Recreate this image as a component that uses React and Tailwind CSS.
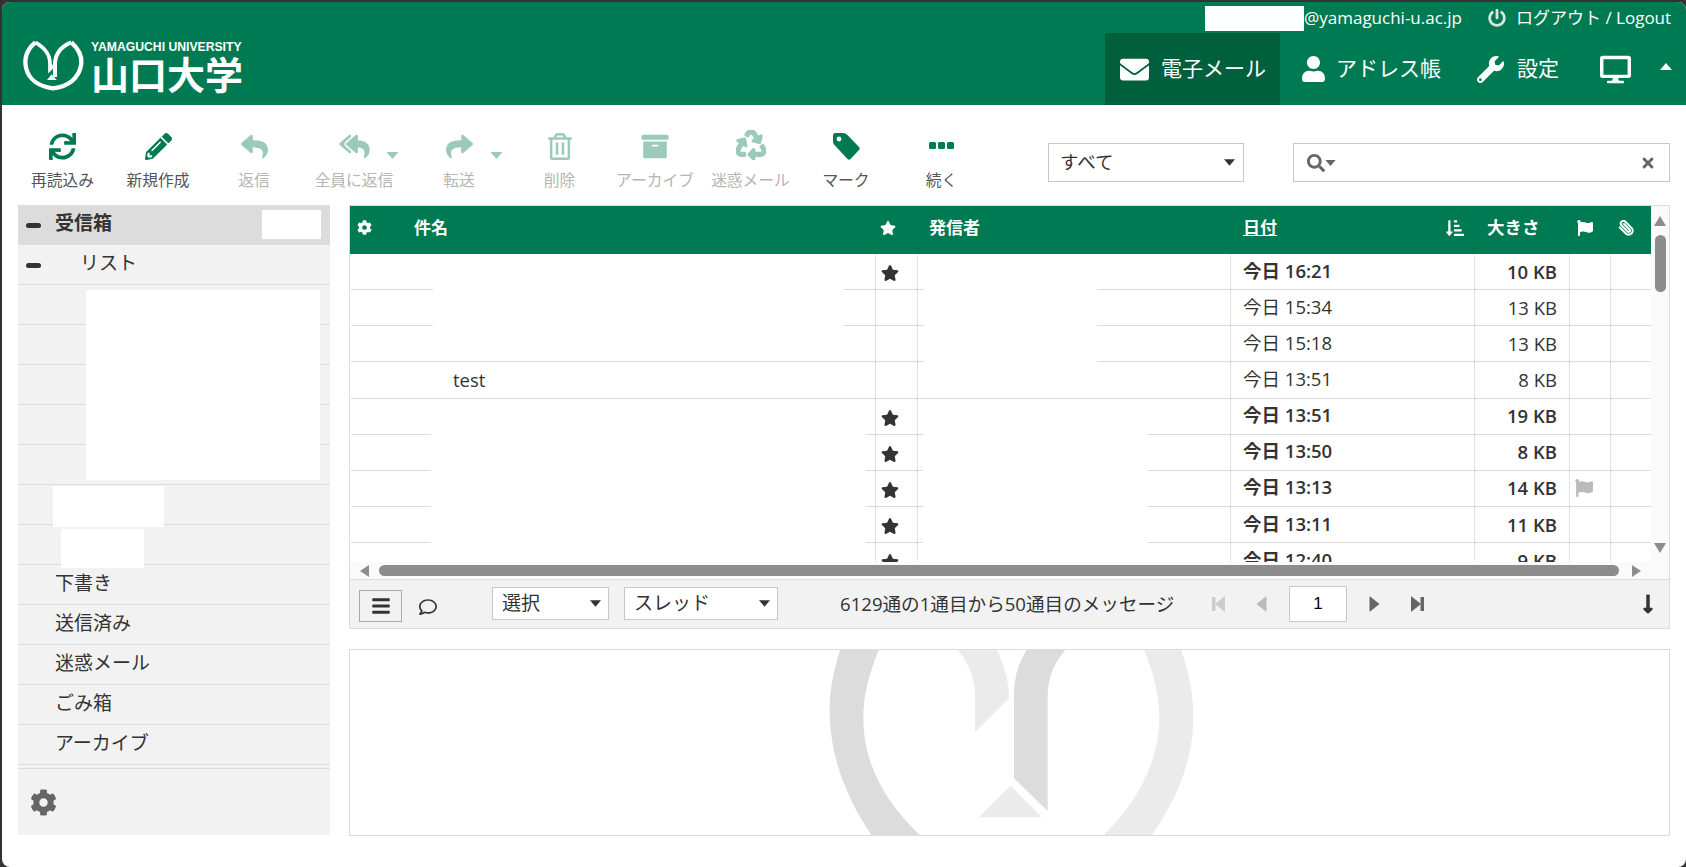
import React from "react";
import {
  FaSync, FaPencilAlt, FaReply, FaReplyAll, FaShare, FaRegTrashAlt, FaArchive, FaRecycle,
  FaEnvelope, FaUser, FaWrench, FaDesktop, FaPowerOff, FaCog, FaStar, FaFlag, FaSortAmountDownAlt,
  FaBars, FaRegComment, FaSearch, FaTimes, FaLongArrowAltDown,
} from "react-icons/fa";
import { FiPaperclip } from "react-icons/fi";

function Logo() {
  return (
    <svg viewBox="0 0 210 186" className="w-[70px] h-[62px] shrink-0 mt-[2px]" fill="none">
      <path d="M52 22 C25 45 18 70 24 98 C32 135 65 155 105 160 C150 155 185 130 190 85 C192 60 180 40 160 22" stroke="#fff" strokeWidth="13" />
      <path d="M52 22 C62 28 72 34 80 44 C92 58 96 72 96 86 L96 102 L106 92" stroke="#fff" strokeWidth="11" />
      <path d="M160 22 C135 32 113 52 111 84 L111 126" stroke="#fff" strokeWidth="12" />
      <path d="M101 118 L116 135 L87 135 Z" fill="#fff" />
    </svg>
  );
}

function Watermark() {
  return (
    <svg viewBox="0 0 1200 585" className="absolute left-[460px] top-[-5px] w-[400px] h-[195px]">
      <path d="M95 0 C65 90 55 160 60 230 C68 360 120 480 195 585 L345 585 C230 480 160 360 160 220 C160 140 180 80 212 0 Z" fill="#dcdcdc" />
      <path d="M1108 0 C1138 80 1150 150 1150 215 C1150 360 1090 480 1015 585 L865 585 C970 490 1048 360 1048 215 C1048 140 1025 70 996 0 Z" fill="#ebebeb" />
      <path d="M432 0 C470 45 495 90 495 155 L495 262 L597 160 C597 100 578 45 552 0 Z" fill="#ebebeb" />
      <path d="M660 0 C630 40 612 90 612 150 L612 400 L713 498 L713 155 C713 95 735 45 780 0 Z" fill="#dcdcdc" />
      <path d="M602 422 L695 517 L507 517 Z" fill="#ebebeb" />
    </svg>
  );
}

function Tri({ className }) {
  return (
    <svg viewBox="0 0 12 7" className={className}>
      <path d="M0 0 L12 0 L6 7 Z" />
    </svg>
  );
}

function TagIcon({ className }) {
  return (
    <svg viewBox="0 0 27 27" className={className}>
      <path
        fillRule="evenodd"
        d="M2.5 0 H10 Q12.5 0 14.5 2 L26 14 Q27.5 15.5 26 17 L17.5 26 Q16 27.5 14.5 26 L1.5 12 Q0 10.5 0 8.5 V2.5 Q0 0 2.5 0 Z M6 3.6 A2.4 2.4 0 1 0 6 8.4 A2.4 2.4 0 1 0 6 3.6 Z"
      />
    </svg>
  );
}

function DotsIcon({ className }) {
  return (
    <svg viewBox="0 0 25 27" className={className}>
      <rect x="0" y="9" width="7" height="7" rx="1.5" />
      <rect x="9" y="9" width="7" height="7" rx="1.5" />
      <rect x="18" y="9" width="7" height="7" rx="1.5" />
    </svg>
  );
}

function Pager({ dir, bar, className }) {
  return (
    <svg viewBox="0 0 13 16" className={className}>
      {dir === "left" ? (
        <>
          {bar && <rect x="0" y="1" width="3.5" height="14" />}
          <path d={bar ? "M13 0 L13 16 L3 8 Z" : "M11.5 0 L11.5 16 L1.5 8 Z"} />
        </>
      ) : (
        <>
          <path d={bar ? "M0 0 L0 16 L10 8 Z" : "M1.5 0 L1.5 16 L11.5 8 Z"} />
          {bar && <rect x="9.5" y="1" width="3.5" height="14" />}
        </>
      )}
    </svg>
  );
}

const tools = [
  { w: "w-[95px]", icon: FaSync, label: "再読込み", on: true, cls: "w-[27px] h-[27px]" },
  { w: "w-[96px]", icon: FaPencilAlt, label: "新規作成", on: true, cls: "w-[27px] h-[27px]" },
  { w: "w-[96px]", icon: FaReply, label: "返信", on: false, cls: "w-[31px] h-[27px]" },
  { w: "w-[104px]", icon: FaReplyAll, label: "全員に返信", on: false, cls: "w-[33px] h-[27px]", caret: true },
  { w: "w-[106px]", icon: FaShare, label: "転送", on: false, cls: "w-[31px] h-[27px]", caret: true },
  { w: "w-[95px]", icon: FaRegTrashAlt, label: "削除", on: false, cls: "w-[24px] h-[27px]" },
  { w: "w-[96px]", icon: FaArchive, label: "アーカイブ", on: false, cls: "w-[30px] h-[27px]" },
  { w: "w-[95px]", icon: FaRecycle, label: "迷惑メール", on: false, cls: "w-[30px] h-[30px] -mt-[3px] stroke-[24px]" },
  { w: "w-[96px]", icon: TagIcon, label: "マーク", on: true, cls: "w-[27px] h-[27px] fill-[#007a53]" },
  { w: "w-[95px]", icon: DotsIcon, label: "続く", on: true, cls: "w-[25px] h-[27px] fill-[#007a53]" },
];

const messages = [
  { date: "今日 16:21", size: "10 KB", bold: true, star: true },
  { date: "今日 15:34", size: "13 KB" },
  { date: "今日 15:18", size: "13 KB" },
  { date: "今日 13:51", size: "8 KB", subject: "test" },
  { date: "今日 13:51", size: "19 KB", bold: true, star: true },
  { date: "今日 13:50", size: "8 KB", bold: true, star: true },
  { date: "今日 13:13", size: "14 KB", bold: true, star: true, flag: true },
  { date: "今日 13:11", size: "11 KB", bold: true, star: true },
  { date: "今日 12:40", size: "9 KB", bold: true, star: true },
];

const folders = [
  { label: "受信箱", active: true, minus: true, badge: true },
  { label: "リスト", minus: true, indent: true },
  {}, {}, {}, {}, {}, {}, {},
  { label: "下書き" },
  { label: "送信済み" },
  { label: "迷惑メール" },
  { label: "ごみ箱" },
  { label: "アーカイブ" },
];

function SelectBox({ label, w, h, pad, text }) {
  return (
    <div className={`${w} ${h} ${pad} ${text} flex items-center justify-between bg-white border border-[#c8c8c8] text-[#333] shrink-0`}>
      <span className="leading-none -mt-[1px]">{label}</span>
      <Tri className="w-[11px] h-[7px] fill-[#333]" />
    </div>
  );
}

export default function App() {
  return (
    <div className="w-[1686px] h-[867px] bg-[#333333] pt-[2px] pl-[2px] overflow-hidden font-['Open_Sans','Noto_Sans_CJK_JP',sans-serif] text-[#333]">
      <div className="w-[1684px] h-[865px] bg-white rounded-lg overflow-hidden flex flex-col">
        {/* header */}
        <header className="h-[103px] bg-[#007a53] text-white shrink-0 flex flex-col">
          <div className="h-[31px] flex items-center justify-end pr-[14px] text-[17px] leading-none">
            <div className="w-[99px] h-[25px] bg-white mt-[2px]" />
            <span className="w-[158px] whitespace-nowrap">@yamaguchi-u.ac.jp</span>
            <FaPowerOff className="w-[18px] h-[18px] ml-[26px] mr-[10px] text-[#d4e8e0]" />
            <span className="w-[156px] whitespace-nowrap">ログアウト / Logout</span>
          </div>
          <div className="h-[72px] flex items-stretch">
            <div className="flex items-start pl-[16px] w-[1103px]">
              <Logo />
              <div className="ml-[3px] flex flex-col pt-[7px]">
                <span className="font-['Liberation_Sans',sans-serif] font-bold text-[12.2px] leading-[14px] whitespace-nowrap">YAMAGUCHI UNIVERSITY</span>
                <span className="font-bold text-[38px] leading-[38px] mt-[1px] whitespace-nowrap">山口大学</span>
              </div>
            </div>
            <div className="w-[175px] bg-[#005f3c] flex items-center pl-[15px] text-[21px] whitespace-nowrap">
              <FaEnvelope className="w-[29px] h-[29px] mr-[12px]" />
              <span>電子メール</span>
            </div>
            <div className="flex items-center pl-[22px] text-[21px] whitespace-nowrap">
              <FaUser className="w-[23px] h-[26px] mr-[11px]" />
              <span className="w-[105px]">アドレス帳</span>
            </div>
            <div className="flex items-center pl-[36px] text-[21px] whitespace-nowrap">
              <FaWrench className="w-[27px] h-[27px] mr-[13px]" />
              <span className="w-[40px]">設定</span>
            </div>
            <FaDesktop className="w-[31px] h-[31px] ml-[43px] self-center" />
            <svg viewBox="0 0 12 7" className="w-[12px] h-[7px] ml-[29px] mt-[30px] fill-white"><path d="M6 0 L12 7 L0 7 Z" /></svg>
          </div>
        </header>

        {/* toolbar */}
        <div className="h-[100px] shrink-0 flex items-start pl-[13px]">
          {tools.map((t) => {
            const Icon = t.icon;
            return (
              <div key={t.label} className={`${t.w} relative shrink-0 flex flex-col items-center pt-[28px]`}>
                <Icon className={`${t.cls} ${t.on ? "text-[#007a53]" : "text-[#9bcab8]"}`} />
                {t.caret && <Tri className="absolute left-[84px] top-[47px] w-[13px] h-[7px] fill-[#9bcab8]" />}
                <span className={`mt-[9px] text-[15.75px] leading-[22px] whitespace-nowrap ${t.on ? "text-[#555]" : "text-[#b5b5b5]"}`}>{t.label}</span>
              </div>
            );
          })}
          <div className="ml-[59px] mt-[38px]">
            <SelectBox label="すべて" w="w-[196px]" h="h-[39px]" pad="pl-[11px] pr-[8px]" text="text-[18.5px]" />
          </div>
          <div className="ml-[49px] mt-[38px] w-[377px] h-[39px] border border-[#c8c8c8] flex items-center pl-[13px] pr-[13px]">
            <FaSearch className="w-[18px] h-[18px] text-[#666]" />
            <Tri className="w-[11px] h-[6px] fill-[#666]" />
            <FaTimes className="w-[16px] h-[16px] text-[#666] ml-auto" />
          </div>
        </div>

        {/* main */}
        <div className="flex items-start">
          {/* folders */}
          <aside className="ml-[16px] w-[312px] h-[630px] bg-[#f2f2f2] shrink-0 flex flex-col">
            {folders.map((f, i) => (
              <div key={i} className={`h-[40px] shrink-0 border-b border-[#dcdcdc] relative flex items-center pb-[2px] text-[19px] ${f.active ? "bg-[#dcdcdc] font-bold" : ""} ${f.indent ? "pl-[62px]" : "pl-[37px]"}`}>
                {f.minus && <span className="absolute left-[8px] top-[18px] w-[15px] h-[5px] rounded-full bg-[#333]" />}
                {f.label && <span className="whitespace-nowrap">{f.label}</span>}
                {f.badge && <span className="absolute left-[244px] top-[5px] w-[59px] h-[29px] bg-white" />}
              </div>
            ))}
            <div className="mt-[3px] flex-1 border-t border-[#dcdcdc] flex items-center pl-[12px]">
              <FaCog className="w-[27px] h-[27px] text-[#666]" />
            </div>
            {/* redacted folder names lie over the rows */}
            <div className="absolute left-[86px] top-[290px] w-[234px] h-[190px] bg-white" />
            <div className="absolute left-[53px] top-[486px] w-[111px] h-[41px] bg-white" />
            <div className="absolute left-[61px] top-[529px] w-[83px] h-[39px] bg-white" />
          </aside>

          {/* list + preview */}
          <div className="ml-[19px] w-[1321px] shrink-0 flex flex-col">
            <div className="border border-[#dcdcdc] h-[424px] flex flex-col">
              <div className="h-[356px] flex shrink-0">
                <div className="w-[1301px] shrink-0 flex flex-col">
                  <div className="h-[48px] shrink-0 bg-[#007a53] text-white font-bold text-[17px] flex items-center pb-[5px]">
                    <div className="w-[525px] shrink-0 flex items-center">
                      <FaCog className="w-[15px] h-[15px] ml-[7px]" />
                      <span className="ml-[42px]">件名</span>
                    </div>
                    <div className="w-[42px] shrink-0"><FaStar className="w-[16px] h-[16px] ml-[5px]" /></div>
                    <div className="w-[313px] shrink-0 pl-[12px]">発信者</div>
                    <div className="w-[244px] shrink-0 pl-[13px] pr-[10px] flex items-center justify-between">
                      <span className="underline">日付</span>
                      <FaSortAmountDownAlt className="w-[18px] h-[18px]" />
                    </div>
                    <div className="w-[95px] shrink-0 pl-[13px] text-[17.5px]">大きさ</div>
                    <div className="w-[41px] shrink-0 pl-[8px]"><FaFlag className="w-[16px] h-[16px]" /></div>
                    <div className="w-[41px] shrink-0 pl-[8px]"><FiPaperclip className="w-[16px] h-[16px] -scale-x-100 stroke-[3px]" /></div>
                  </div>
                  <div className="relative h-[308px] overflow-hidden">
                    {messages.map((m, i) => (
                      <div key={i} className={`h-[36.125px] border-b border-[#dcdcdc] ml-[1px] flex items-stretch text-[18.5px] ${m.bold ? "font-semibold" : ""}`}>
                        <div className="w-[524px] shrink-0 pl-[102px] flex items-center">{m.subject}</div>
                        <div className="w-[42px] shrink-0 border-l border-dotted border-[#cccccc] flex items-center pl-[5px] pt-[3px]">
                          {m.star && <FaStar className="w-[18px] h-[18px] text-[#333]" />}
                        </div>
                        <div className="w-[313px] shrink-0 border-l border-dotted border-[#cccccc]" />
                        <div className="w-[244px] shrink-0 border-l border-dotted border-[#cccccc] pl-[12px] pb-[2px] flex items-center whitespace-nowrap">{m.date}</div>
                        <div className="w-[95px] shrink-0 border-l border-dotted border-[#cccccc] pr-[12px] flex items-center justify-end whitespace-nowrap">{m.size}</div>
                        <div className="w-[41px] shrink-0 border-l border-dotted border-[#cccccc] flex items-center pl-[5px]">
                          {m.flag && <FaFlag className="w-[18px] h-[18px] text-[#bbbbbb]" />}
                        </div>
                        <div className="w-[41px] shrink-0 border-l border-dotted border-[#cccccc]" />
                      </div>
                    ))}
                    {/* redacted subjects and senders */}
                    <div className="absolute left-[83px] top-[2px] w-[410px] h-[105px] bg-white" />
                    <div className="absolute left-[574px] top-[2px] w-[173px] h-[141px] bg-white" />
                    <div className="absolute left-[81px] top-[146px] w-[435px] h-[162px] bg-white" />
                    <div className="absolute left-[573px] top-[146px] w-[224px] h-[162px] bg-white" />
                  </div>
                </div>
                {/* vertical scrollbar */}
                <div className="w-[18px] bg-[#fafafa] flex flex-col items-center">
                  <svg viewBox="0 0 12 10" className="w-[12px] h-[10px] mt-[10px] fill-[#8c8c8c]"><path d="M6 0 L12 10 L0 10 Z" /></svg>
                  <div className="w-[11px] h-[57px] mt-[9px] rounded-full bg-[#8c8c8c]" />
                  <svg viewBox="0 0 12 10" className="w-[12px] h-[10px] mt-auto mb-[9px] fill-[#8c8c8c]"><path d="M6 10 L12 0 L0 0 Z" /></svg>
                </div>
              </div>
              {/* horizontal scrollbar */}
              <div className="h-[18px] shrink-0 bg-[#fafafa] flex items-center border-b border-[#dcdcdc]">
                <svg viewBox="0 0 9 12" className="w-[9px] h-[12px] ml-[10px] fill-[#8c8c8c]"><path d="M0 6 L9 0 L9 12 Z" /></svg>
                <div className="w-[1240px] h-[11px] ml-[10px] rounded-full bg-[#8c8c8c]" />
                <svg viewBox="0 0 9 12" className="w-[9px] h-[12px] ml-[13px] fill-[#8c8c8c]"><path d="M9 6 L0 0 L0 12 Z" /></svg>
              </div>
              {/* list footer */}
              <div className="flex-1 bg-[#f2f2f2] flex items-center pl-[9px] pr-[14px]">
                <div className="w-[43px] h-[32px] border border-[#aaaaaa] flex items-center justify-center mt-[3px] shrink-0">
                  <FaBars className="w-[20px] h-[20px] text-[#333]" />
                </div>
                <FaRegComment className="w-[20px] h-[18px] ml-[16px] mt-[5px] shrink-0" />
                <div className="ml-[54px] -mt-[1px]">
                  <SelectBox label="選択" w="w-[117px]" h="h-[33px]" pad="pl-[9px] pr-[7px]" text="text-[19px]" />
                </div>
                <div className="ml-[15px] -mt-[1px]">
                  <SelectBox label="スレッド" w="w-[154px]" h="h-[33px]" pad="pl-[9px] pr-[7px]" text="text-[19px]" />
                </div>
                <span className="ml-[62px] w-[335px] text-[18.6px] whitespace-nowrap shrink-0">6129通の1通目から50通目のメッセージ</span>
                <Pager dir="left" bar className="w-[13px] h-[16px] ml-[37px] fill-[#cccccc] shrink-0" />
                <Pager dir="left" className="w-[13px] h-[16px] ml-[30px] fill-[#bbbbbb] shrink-0" />
                <div className="w-[58px] h-[36px] ml-[21px] -mt-[1px] bg-white border border-[#c8c8c8] flex items-center justify-center text-[17px] text-black font-['Liberation_Sans',sans-serif] shrink-0">1</div>
                <Pager dir="right" className="w-[13px] h-[16px] ml-[21px] fill-[#666] shrink-0" />
                <Pager dir="right" bar className="w-[13px] h-[16px] ml-[30px] fill-[#666] shrink-0" />
                <FaLongArrowAltDown className="w-[14px] h-[22px] ml-auto text-[#333] shrink-0" />
              </div>
            </div>
            {/* preview */}
            <div className="mt-[20px] h-[187px] border border-[#dcdcdc] bg-white relative overflow-hidden">
              <Watermark />
            </div>
          </div>
        </div>
      </div>
    </div>
  );
}
